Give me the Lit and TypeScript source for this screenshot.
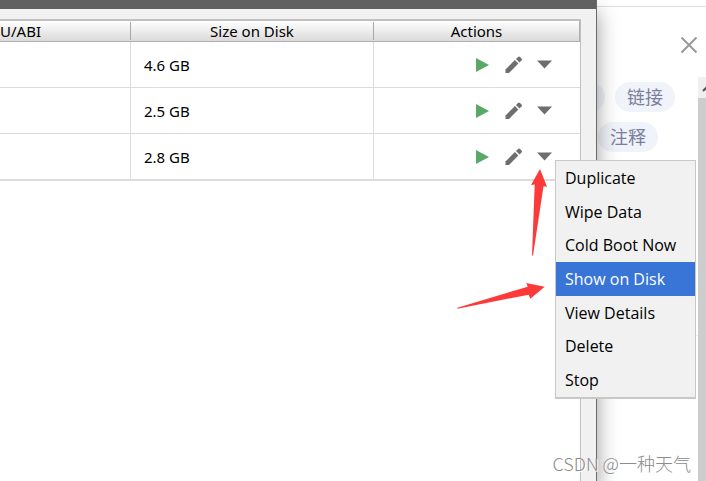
import { LitElement, html, css, svg } from "lit";
import { customElement, state } from "lit/decorators.js";
import { classMap } from "lit/directives/class-map.js";

const SIZES = ["4.6 GB", "2.5 GB", "2.8 GB"];
const MENU = ["Duplicate", "Wipe Data", "Cold Boot Now", "Show on Disk", "View Details", "Delete", "Stop"];

@customElement("app-root")
export class AppRoot extends LitElement {
  @state() private active = "Show on Disk";

  static styles = css`
    :host {
      display: flex;
      position: relative;
      min-height: 100vh;
      overflow: hidden;
      background: #fff;
      color: #000;
      font-family: "Noto Sans", "Noto Sans CJK SC", sans-serif;
      font-size: 15px;
    }
    * { box-sizing: border-box; }
    button {
      border: 0;
      padding: 0;
      background: none;
      font: inherit;
      color: inherit;
    }
    svg { display: block; }
    .window {
      position: relative;
      z-index: 1;
      flex: 1;
      display: flex;
      flex-direction: column;
      background: #f1f1f1;
      border-right: 1px solid #6b6b6b;
      box-shadow: 0 12px 20px rgba(0, 0, 0, 0.4);
    }
    .titlebar { height: 9px; background: #616161; }
    .pane {
      flex: 1;
      margin: 10px 15px 0 0;
      background: #fff;
      border: solid #c0c0c0;
      border-width: 2px 1px 0 0;
    }
    table {
      width: 100%;
      table-layout: fixed;
      border-collapse: separate;
      border-spacing: 0;
      border-bottom: 1px solid #dcdcdc;
    }
    th, td { padding: 0; }
    th {
      height: 21px;
      font-weight: 400;
      line-height: 20px;
      border-bottom: 1px solid #b0b0b0;
      background: linear-gradient(#fff, #dadada);
    }
    th:first-child { width: 131px; text-align: left; }
    th:nth-child(2) { width: 243px; }
    th:last-child { border-right: 1px solid #b0b0b0; }
    .split { border-right: 1px solid #a8a8a8; line-height: 18px; height: 18px; }
    td { height: 46px; border-bottom: 1px solid #dcdcdc; }
    td:not(:last-child) { border-right: 1px solid #dcdcdc; }
    .size { padding-left: 13px; }
    .actions { display: flex; justify-content: flex-end; padding-right: 20px; }
    .icon {
      width: 31px;
      height: 30px;
      display: grid;
      place-items: center;
      color: #6e6e6e;
    }
    .play { color: #59a869; }
    .side { width: 109px; display: flex; flex-direction: column; }
    .top { height: 7px; border-bottom: 1px solid #dedede; }
    .close {
      align-self: flex-end;
      width: 24px;
      height: 24px;
      margin: 26px 5px 20px 0;
      display: grid;
      place-items: center;
      color: #999;
    }
    .body { flex: 1; display: flex; }
    .tags { flex: 1; display: flex; flex-direction: column; gap: 10px; padding-top: 5px; min-width: 0; }
    .tagrow { display: flex; gap: 10px; }
    .tagrow.end { justify-content: flex-end; padding-right: 23px; }
    .tagrow.start { padding-left: 1px; }
    .tag {
      flex: none;
      width: 60px;
      height: 30px;
      border-radius: 15px;
      background: #f0f3f9;
      color: #7b7f9e;
      font-family: "Noto Sans CJK SC", sans-serif;
      font-size: 18px;
      line-height: 28px;
      text-align: center;
      text-decoration: none;
    }
    .rule { margin-top: 173px; border-top: 1px solid #eee; }
    .scroll { width: 8px; display: flex; flex-direction: column; background: #cdcdcd; }
    .up { height: 21px; background: #f0f0f0; overflow: hidden; }
    .menu {
      position: absolute;
      z-index: 2;
      top: 160px;
      right: 10px;
      width: 141px;
      height: 239px;
      display: grid;
      grid-auto-rows: 1fr;
      background: #f1f1f1;
      border: 1px solid #c8c8c8;
      border-bottom-width: 2px;
      font-family: "Open Sans", sans-serif;
      font-size: 16px;
    }
    .item { padding-left: 9px; text-align: left; white-space: nowrap; }
    .item.on { background: #3875d6; color: #fff; }
    .arrows { position: absolute; z-index: 2; top: 160px; right: 156px; pointer-events: none; }
    .mark {
      position: absolute;
      z-index: 3;
      right: 15px;
      bottom: 5px;
      font-family: "Noto Sans CJK SC", sans-serif;
      font-size: 18px;
      font-weight: 300;
      line-height: 26px;
      color: #8c8c8c;
      text-shadow: 1px 1px 0 #fff;
      white-space: nowrap;
    }
  `;

  private row(size: string) {
    return html`<tr>
      <td></td>
      <td class="size">${size}</td>
      <td>
        <div class="actions">
          <button class="icon play" aria-label="Launch">
            <svg width="15" height="16"><path fill="currentColor" d="M1 1L14 8L1 15Z" /></svg>
          </button>
          <button class="icon" aria-label="Edit">
            <svg width="18" height="18" viewBox="0 0 18 18" fill="currentColor">
              <path d="M.5 17V13.500L9.900 4.100L13.400 7.600L4 17Z" />
              <path d="M11 3L13 1Q14 0 15 1L16.500 2.500Q17.500 3.500 16.500 4.500L14.500 6.500Z" />
            </svg>
          </button>
          <button class="icon" aria-label="More actions">
            <svg width="17" height="9"><path fill="currentColor" d="M1 .5H16L8.500 8.500Z" /></svg>
          </button>
        </div>
      </td>
    </tr>`;
  }

  render() {
    return html`
      <main class="window">
        <div class="titlebar"></div>
        <div class="pane">
          <table>
            <thead>
              <tr>
                <th><div class="split">U/ABI</div></th>
                <th><div class="split">Size on Disk</div></th>
                <th>Actions</th>
              </tr>
            </thead>
            <tbody>${SIZES.map((s) => this.row(s))}</tbody>
          </table>
        </div>
      </main>
      <aside class="side">
        <div class="top"></div>
        <button class="close" aria-label="Close">
          <svg width="18" height="18" stroke="currentColor" stroke-width="2"><path d="M1.500 1.500L16.500 16.500M16.500 1.500L1.500 16.500" /></svg>
        </button>
        <div class="body">
          <div class="tags">
            <div class="tagrow end"><a class="tag" href="#"></a><a class="tag" href="#">链接</a></div>
            <div class="tagrow start"><a class="tag" href="#">注释</a></div>
            <div class="rule"></div>
          </div>
          <div class="scroll">
            <div class="up">
              <svg width="12" height="21" fill="none" stroke="#505050" stroke-width="2"><path d="M5 14L10 9" /></svg>
            </div>
          </div>
        </div>
      </aside>
      <div class="menu" role="menu">
        ${MENU.map(
          (m) => html`<button
            role="menuitem"
            class=${classMap({ item: true, on: m === this.active })}
            @mouseenter=${() => (this.active = m)}
          >${m}</button>`
        )}
      </div>
      <svg class="arrows" width="100" height="160" viewBox="450 160 100 160" fill="#fc3a3a">
        ${svg`<path d="M540 169L547 186.700L543.500 186.200L533 255.500H532L534.700 184.500L531 185Z" />
        <path d="M544.700 286.700L530.300 298.700L528.700 294.700L457.400 308.700V307.700L527.700 286.700L526.300 283Z" />`}
      </svg>
      <div class="mark">CSDN @一种天气</div>
    `;
  }
}
